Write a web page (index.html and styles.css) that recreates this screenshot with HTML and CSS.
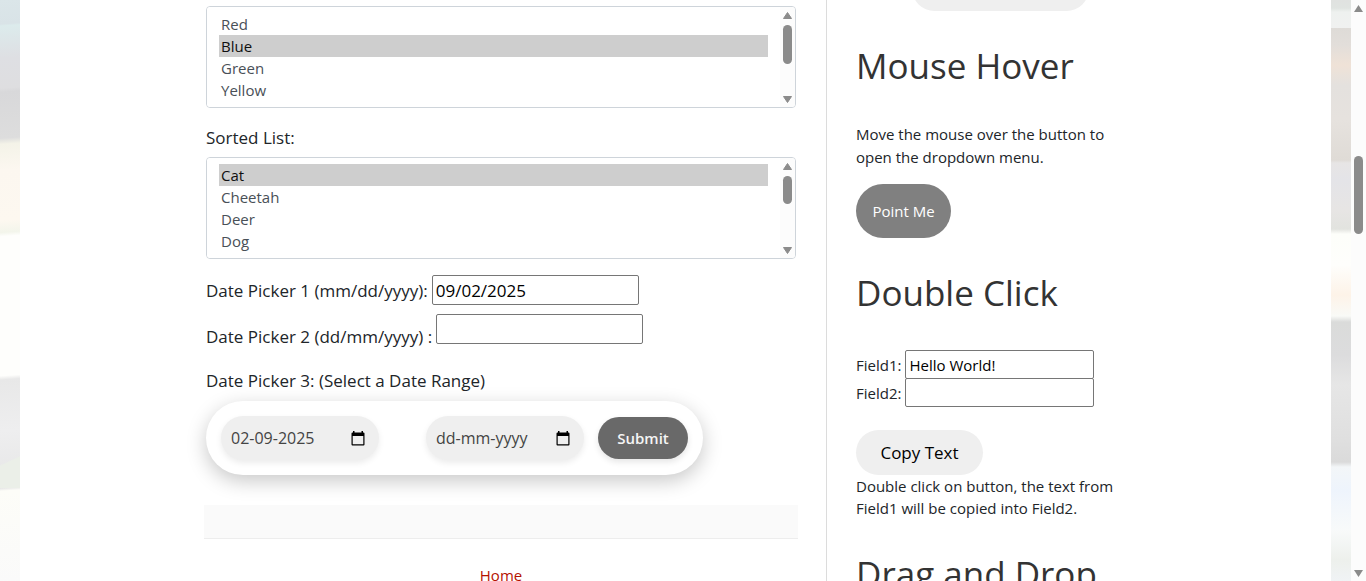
FILE: index.html
```html
<!DOCTYPE html>
<html lang="en">
<head>
<meta charset="utf-8">
<title>Automation Practice</title>
<link rel="stylesheet" href="styles.css">
</head>
<body>
<div class="edge edge-left"></div>
<div class="page">
  <main class="main">
    <div class="listbox">
      <select class="list" multiple aria-label="Colors">
        <option>Red</option><option selected>Blue</option><option>Green</option><option>Yellow</option><option>Red</option><option>White</option><option>Green</option>
      </select>
      <svg class="rail" width="15" height="100" viewBox="0 0 15 100" aria-hidden="true">
        <path d="M7.500 5.500L11.500 11.500H3.500Z"/><rect x="3" y="18" width="9" height="39" rx="4.500"/><path d="M7.500 95.500L11.500 89.500H3.500Z"/>
      </svg>
    </div>
    <label class="label list-label" for="animals">Sorted List:</label>
    <div class="listbox">
      <select class="list" id="animals" multiple>
        <option selected>Cat</option><option>Cheetah</option><option>Deer</option><option>Dog</option><option>Elephant</option><option>Fox</option><option>Giraffe</option><option>Lion</option><option>Rabbit</option><option>Zebra</option>
      </select>
      <svg class="rail" width="15" height="100" viewBox="0 0 15 100" aria-hidden="true">
        <path d="M7.500 5.500L11.500 11.500H3.500Z"/><rect x="3" y="18" width="9" height="28" rx="4.500"/><path d="M7.500 95.500L11.500 89.500H3.500Z"/>
      </svg>
    </div>
    <div class="date-row">
      <label class="label" for="date1">Date Picker 1 (mm/dd/yyyy):</label>
      <input class="date-input" id="date1" type="text" value="09/02/2025">
    </div>
    <div class="date-row date-row-low">
      <label class="label" for="date2">Date Picker 2 (dd/mm/yyyy) :</label>
      <input class="date-input" id="date2" type="text">
    </div>
    <p class="label range-label">Date Picker 3: (Select a Date Range)</p>
    <form class="range">
      <div class="range-field range-start">
        <input class="range-input" type="text" value="02-09-2025" aria-label="Start date">
        <svg class="calendar" width="14" height="15" viewBox="0 0 14 15" aria-hidden="true"><path fill-rule="evenodd" d="M2 0h1.500v1.500h7V0H12v1.500h.5q1 0 1 1V13.500q0 1-1 1h-11q-1 0-1-1V2.500q0-1 1-1H2ZM1.700 5v8.300h10.600V5Z"/></svg>
      </div>
      <div class="range-field">
        <input class="range-input" type="text" value="dd-mm-yyyy" aria-label="End date">
        <svg class="calendar" width="14" height="15" viewBox="0 0 14 15" aria-hidden="true"><path fill-rule="evenodd" d="M2 0h1.500v1.500h7V0H12v1.500h.5q1 0 1 1V13.500q0 1-1 1h-11q-1 0-1-1V2.500q0-1 1-1H2ZM1.700 5v8.300h10.600V5Z"/></svg>
      </div>
      <button class="submit" type="button">Submit</button>
    </form>
    <div class="band"></div>
    <a class="home" href="#">Home</a>
  </main>
  <aside class="side">
    <button class="pill pill-top" type="button"></button>
    <h2 class="heading">Mouse Hover</h2>
    <p class="text intro">Move the mouse over the button to open the dropdown menu.</p>
    <button class="point" type="button">Point Me</button>
    <h2 class="heading">Double Click</h2>
    <div class="fields">
      <div class="field"><label for="field1">Field1:</label><input class="field-input" id="field1" type="text" value="Hello World!"></div>
      <div class="field"><label for="field2">Field2:</label><input class="field-input" id="field2" type="text"></div>
    </div>
    <button class="pill copy" type="button">Copy Text</button>
    <p class="text">Double click on button, the text from Field1 will be copied into Field2.</p>
    <h2 class="heading">Drag and Drop</h2>
  </aside>
</div>
<div class="edge edge-right"></div>
<div class="scrollbar" aria-hidden="true">
  <svg width="15" height="16" viewBox="0 0 15 16"><path d="M7.500 5L12 12H3Z"/></svg>
  <div class="thumb"></div>
  <svg class="arrow-down" width="15" height="16" viewBox="0 0 15 16"><path d="M7.500 12L12 5H3Z"/></svg>
</div>
</body>
</html>
```

FILE: styles.css
```css
* { box-sizing: border-box; }

body {
  margin: 0;
  height: 100vh;
  display: flex;
  overflow: hidden;
  background: #fff;
  color: #212529;
  font-family: "Open Sans", "Noto Sans", sans-serif;
  font-size: 15px;
}

button, input, select { font-family: inherit; margin: 0; }
p, h2 { margin: 0; }

.edge { flex: 0 0 20px; }
.edge-left {
  background:
    linear-gradient(155deg, transparent 58%, #ebefe8 60%) 0 420px / 20px 68px no-repeat,
    linear-gradient(176deg, #dbe6e9 0, #d9e3e7 24px, #dcebec 26px, #dedfe3 58px, #dedee0 88px, #d8d8da 92px, #dddddd 138px, #f4f3e8 144px, #fcf7f0 170px, #fdf8f0 220px, #f3f5eb 232px, #fefefc 236px, #fefefc 375px, #e8e8e8 379px, #eeeeef 430px, #e6e6e6 487px, #fdfdf8 490px, #fafafa 581px);
}
.edge-right {
  background: linear-gradient(180deg, #e0e2e0 0, #e0e4e1 8px, #eef1ef 12px, #f0f1f0 28px, #dedbd7 28px, #e2deda 45px, #efe2d7 65px, #e4e1de 85px, #e6e2de 120px, #dfdbd6 160px, #e7e5e5 163px, #e4e4e8 180px, #e7e5e4 210px, #e2e3df 229px, #fdfefa 234px, #fefefc 265px, #fdf3e8 295px, #f9faf7 316px, #dadbda 322px, #dcdcdd 355px, #e6e6e6 385px, #dfdfdf 440px, #dadada 462px, #f3f6f8 467px, #eef4fc 490px, #f8fafa 530px, #edf0ec 560px, #f0f3f5 581px);
}

.page {
  flex: 1;
  min-width: 0;
  display: grid;
  grid-template-columns: minmax(0, 1fr) 505px;
}
.main { padding: 6px 28px 0 184px; }
.main > * { margin-left: 2px; margin-right: 2px; }
.side {
  border-left: 1px solid #dcdcdc;
  padding: 0 213px 0 29px;
}

.listbox {
  display: flex;
  height: 102px;
  border: 1px solid #ced4da;
  border-radius: 4px;
  overflow: hidden;
}
.list {
  flex: 1;
  height: 100px;
  padding: 6px 12px;
  border: 0;
  outline: 0;
  background: #fff;
  color: #495057;
  font-size: 15px;
  overflow: hidden;
  scrollbar-width: none;
}
.list option {
  min-height: 22px;
  height: 22px;
  padding: 1px 2px 0;
  line-height: 22px;
}
.rail { flex: none; background: #fcfcfc; fill: #8b8b8b; stroke: #8b8b8b; stroke-width: 1px; stroke-linejoin: round; }
.rail rect { stroke: none; }

.label { display: block; font-size: 17px; line-height: 27px; }
.list-label { margin-top: 16px; margin-bottom: 6px; }

.date-row { display: flex; align-items: center; gap: 4px; margin-top: 16px; }
.date-row-low { align-items: flex-start; margin-top: 9px; }
.date-row-low .label { padding-top: 9px; }
.date-input {
  width: 207px;
  height: 30px;
  padding: 0 3px;
  border: 1px solid #767676;
  border-radius: 2px;
  color: #000;
  font-size: 17px;
}
.range-label { margin-top: 17px; }

.range {
  display: flex;
  align-items: center;
  gap: 14px;
  width: fit-content;
  height: 74px;
  margin-top: 7px;
  padding: 0 15px;
  border-radius: 40px;
  background: #fff;
  box-shadow: 0 6px 20px rgba(0, 0, 0, 0.22);
}
.range-field {
  display: flex;
  align-items: center;
  width: 158px;
  height: 44px;
  padding: 0 14px 0 10px;
  border-radius: 22px;
  background: #efefef;
  box-shadow: 0 3px 6px rgba(0, 0, 0, 0.08);
}
.range-start { margin-right: 33px; }
.range-input {
  flex: 1;
  min-width: 0;
  padding: 0;
  border: 0;
  background: transparent;
  color: #444;
  font-size: 16px;
}
.calendar { flex: none; }
.submit {
  width: 90px;
  height: 42px;
  padding: 0;
  border: 0;
  border-radius: 21px;
  background: #696969;
  color: #f5f5f5;
  font-size: 15px;
  font-weight: 600;
  box-shadow: 0 3px 6px rgba(0, 0, 0, 0.1);
}

.main .band {
  height: 34px;
  margin: 30px 0 0;
  border-bottom: 1px solid #ededed;
  background: #fafafa;
}
.home {
  display: block;
  width: fit-content;
  margin-top: 25px;
  color: #b51200;
  font-size: 15px;
  line-height: 22px;
  text-decoration: none;
}
.main .home { margin-left: auto; margin-right: auto; }

.pill {
  display: block;
  height: 45px;
  border: 0;
  border-radius: 23px;
  background: #efefef;
  color: #000;
  font-size: 17px;
}
.pill-top { width: 177px; margin: -34px auto 0 56px; }
.copy { width: 127px; margin-top: 23px; padding: 0; }
.heading {
  margin-top: 33px;
  margin-bottom: 35px;
  color: #333;
  font-size: 35px;
  font-weight: 400;
  line-height: 44px;
}
.text { font-size: 15px; line-height: 22px; }
.intro { line-height: 23px; }
.point {
  display: block;
  width: 95px;
  height: 54px;
  margin-top: 15px;
  padding: 0;
  border: 0;
  border-radius: 27px;
  background: #808080;
  color: #fff;
  font-size: 15px;
}
.field { display: flex; align-items: center; gap: 4px; }
.field + .field { margin-top: -1px; }
.field-input {
  width: 189px;
  height: 29px;
  padding: 0 3px;
  border: 1px solid #767676;
  border-radius: 2px;
  color: #000;
  font-size: 15px;
}

.scrollbar {
  flex: 0 0 15px;
  display: flex;
  flex-direction: column;
  align-items: center;
  background: #fcfcfc;
  fill: #8b8b8b;
}
.thumb {
  width: 9px;
  height: 78px;
  margin-top: 140px;
  border-radius: 5px;
  background: #8b8b8b;
}
.arrow-down { margin-top: auto; }
```
